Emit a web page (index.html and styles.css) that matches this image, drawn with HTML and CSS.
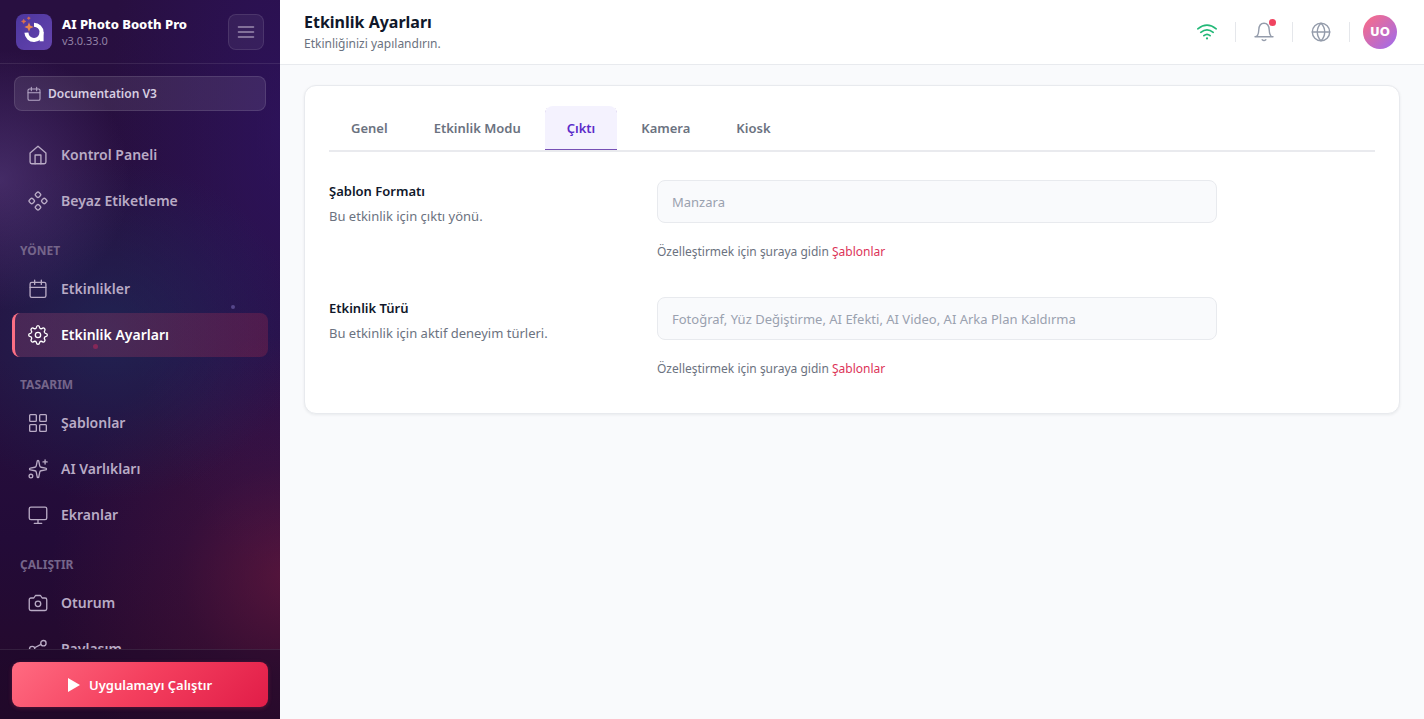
FILE: index.html
```html
<!DOCTYPE html>
<html lang="tr">
<head>
<meta charset="utf-8">
<meta name="viewport" content="width=device-width, initial-scale=1">
<title>Etkinlik Ayarları</title>
<link rel="stylesheet" href="styles.css">
</head>
<body>
<div class="app">
  <aside class="sidebar">
    <span class="spark spark-blue"></span>
    <span class="spark spark-red"></span>
    <div class="brand">
      <svg class="logo" viewBox="0 0 36 36" aria-hidden="true">
        <defs><linearGradient id="logo-bg" x1="0" y1="0" x2="1" y2="1"><stop offset="0" stop-color="#4c369e"/><stop offset="1" stop-color="#6544ae"/></linearGradient></defs>
        <rect width="36" height="36" rx="8" fill="url(#logo-bg)"/>
        <path d="M18 10.700a7.600 7.600 0 1 1-7.600 8" fill="none" stroke="#fff" stroke-width="4"/>
        <path d="M23.600 18v9.300h4V18z" fill="#fff"/>
        <path d="M13 10.200l.8 2 2 .8-2 .8-.8 2-.8-2-2-.8 2-.8z" fill="#e8854e" stroke="#e8854e" stroke-width="1.400"/>
        <path d="M7.700 5.300l.7 1.500 1.500.6-1.500.6-.7 1.500-.7-1.500-1.500-.6 1.500-.6zM12.800 2.800l.5 1 1 .4-1 .4-.5 1-.5-1-1-.4 1-.4z" fill="#e0724a" stroke="#e0724a" stroke-width=".6"/>
      </svg>
      <div class="brand-text">
        <strong class="brand-name">AI Photo Booth Pro</strong>
        <span class="brand-version">v3.0.33.0</span>
      </div>
      <button class="menu-button" type="button" aria-label="Menü">
        <svg class="icon" viewBox="0 0 18 18"><path d="M1.500 4h15M1.500 9h15M1.500 14h15"/></svg>
      </button>
    </div>
    <button class="event-picker" type="button">
      <svg class="icon icon-small" viewBox="0 0 24 24"><rect x="3" y="4.500" width="18" height="17" rx="2"/><path d="M3 10h18M8 2v5M16 2v5"/></svg>
      Documentation V3
    </button>
    <nav class="nav">
      <a class="nav-item" href="#"><svg class="icon" viewBox="0 0 24 24"><path d="M2.500 9.500l9.500-8 9.500 8V20.500a2 2 0 0 1-2 2h-15a2 2 0 0 1-2-2z"/><path d="M8.500 22.500V12h7v10.500"/></svg>Kontrol Paneli</a>
      <a class="nav-item" href="#"><svg class="icon" viewBox="0 0 24 24"><rect x="9.200" y="1.700" width="5.600" height="5.600" rx="1.800" transform="rotate(45 12 4.500)"/><rect x="1.700" y="9.200" width="5.600" height="5.600" rx="1.800" transform="rotate(45 4.500 12)"/><rect x="16.700" y="9.200" width="5.600" height="5.600" rx="1.800" transform="rotate(45 19.500 12)"/><rect x="9.200" y="16.700" width="5.600" height="5.600" rx="1.800" transform="rotate(45 12 19.500)"/></svg>Beyaz Etiketleme</a>
      <h2 class="nav-label">YÖNET</h2>
      <a class="nav-item" href="#"><svg class="icon" viewBox="0 0 24 24"><rect x="2.500" y="4" width="19" height="18" rx="2"/><path d="M2.500 10h19M8 1.500v5M16 1.500v5"/></svg>Etkinlikler</a>
      <a class="nav-item active" href="#" aria-current="page"><svg class="icon" viewBox="0 0 24 24"><circle cx="12" cy="12" r="3.200"/><path d="M10 3.200Q10.400.8 12 .8t2 2.400q.3 1.400 1.700 1.300.9-.1 1.900-.8 1.200-.6 2.200.5 1 1.100.4 2.200-.8 1.200-.6 2.200.3 1.100 1.500 1.400 2.100.4 2.100 2t-2.100 2q-1.200.3-1.500 1.400-.2 1 .6 2.200.6 1.100-.4 2.200-1 1.100-2.200.5-1-.7-1.900-.8-1.400-.1-1.700 1.300-.4 2.400-2 2.400t-2-2.400q-.3-1.400-1.700-1.300-.9.100-1.900.8-1.200.6-2.200-.5-1-1.100-.4-2.200.8-1.200.6-2.200Q4.100 14.300 2.900 14 .8 13.600.8 12t2.100-2q1.200-.3 1.500-1.400.2-1-.6-2.200-.6-1.100.4-2.200 1-1.100 2.200-.5 1 .7 1.900.8Q9.700 4.600 10 3.200z"/></svg>Etkinlik Ayarları</a>
      <h2 class="nav-label">TASARIM</h2>
      <a class="nav-item" href="#"><svg class="icon" viewBox="0 0 24 24"><rect x="2" y="2" width="8" height="8" rx="1"/><rect x="14" y="2" width="8" height="8" rx="1"/><rect x="2" y="14" width="8" height="8" rx="1"/><rect x="14" y="14" width="8" height="8" rx="1"/></svg>Şablonlar</a>
      <a class="nav-item" href="#"><svg class="icon" viewBox="0 0 24 24"><path d="M11 2.800a1 1 0 0 1 2 0l1.100 5.500a2 2 0 0 0 1.600 1.600l5.500 1.100a1 1 0 0 1 0 2l-5.500 1.100a2 2 0 0 0-1.600 1.600L13 21.200a1 1 0 0 1-2 0l-1.100-5.500a2 2 0 0 0-1.600-1.600L2.800 13a1 1 0 0 1 0-2l5.500-1.100a2 2 0 0 0 1.600-1.600z"/><path d="M20.500 1v5M23 3.500h-5"/><circle cx="3.500" cy="20.500" r="2.200"/></svg>AI Varlıkları</a>
      <a class="nav-item" href="#"><svg class="icon" viewBox="0 0 24 24"><rect x="1.500" y="2.500" width="21" height="15" rx="2"/><path d="M7.500 22h9M12 17.500V22"/></svg>Ekranlar</a>
      <h2 class="nav-label">ÇALIŞTIR</h2>
      <a class="nav-item" href="#"><svg class="icon" viewBox="0 0 24 24"><path d="M22.500 19a2 2 0 0 1-2 2h-17a2 2 0 0 1-2-2V8a2 2 0 0 1 2-2H7l2-3h6l2 3h3.500a2 2 0 0 1 2 2z"/><circle cx="12" cy="13" r="3.300"/></svg>Oturum</a>
      <a class="nav-item" href="#"><svg class="icon" viewBox="0 0 24 24"><circle cx="18.500" cy="5" r="3.200"/><circle cx="5" cy="12" r="3.200"/><circle cx="18.500" cy="19" r="3.200"/><path d="M7.900 13.500l7.700 4M15.600 6.500l-7.700 4"/></svg>Paylaşım</a>
    </nav>
    <div class="sidebar-footer">
      <button class="run-button" type="button">
        <svg class="play" viewBox="0 0 12 14" aria-hidden="true"><path d="M0 0l12 7-12 7z"/></svg>
        Uygulamayı Çalıştır
      </button>
    </div>
  </aside>

  <div class="page">
    <header class="topbar">
      <div class="heading">
        <h1 class="title">Etkinlik Ayarları</h1>
        <p class="subtitle">Etkinliğinizi yapılandırın.</p>
      </div>
      <div class="tools">
        <button class="tool online" type="button" aria-label="Bağlantı"><svg class="icon" viewBox="0 0 20 20"><path d="M.8 6.800q9.200-7.200 18.400 0M3.800 10.300q6.200-5 12.400 0M6.900 13.600q3.100-2.600 6.200 0"/><path d="M10 16.400v.1" stroke-width="2.200"/></svg></button>
        <button class="tool" type="button" aria-label="Bildirimler"><svg class="icon" viewBox="0 0 20 20"><path d="M1 14.800c2.800 0 3.600-2.500 3.800-7C5 4 6.800 1.300 10 1.300s5 2.700 5.200 6.500c.2 4.500 1 7 3.800 7zM8.200 17.800q1.800 1.600 3.600 0"/></svg><span class="badge"></span></button>
        <button class="tool" type="button" aria-label="Dil"><svg class="icon" viewBox="0 0 20 20"><circle cx="10" cy="10" r="8.700"/><path d="M1.300 10h17.400M10 1.300c2.500 2.400 3.700 5.400 3.700 8.700s-1.200 6.300-3.700 8.700C7.500 16.300 6.300 13.300 6.300 10S7.500 3.700 10 1.300z"/></svg></button>
        <button class="avatar" type="button">UO</button>
      </div>
    </header>
    <main class="content">
      <section class="card">
        <div class="tabs" role="tablist">
          <button class="tab" type="button" role="tab">Genel</button>
          <button class="tab" type="button" role="tab">Etkinlik Modu</button>
          <button class="tab selected" type="button" role="tab" aria-selected="true">Çıktı</button>
          <button class="tab" type="button" role="tab">Kamera</button>
          <button class="tab" type="button" role="tab">Kiosk</button>
        </div>
        <div class="settings">
          <div class="setting">
            <div class="setting-info">
              <label class="setting-name" for="format">Şablon Formatı</label>
              <p class="setting-description">Bu etkinlik için çıktı yönü.</p>
            </div>
            <div class="setting-field">
              <input class="field" id="format" type="text" value="Manzara" disabled>
              <p class="hint">Özelleştirmek için şuraya gidin <a class="link" href="#">Şablonlar</a></p>
            </div>
          </div>
          <div class="setting">
            <div class="setting-info">
              <label class="setting-name" for="kind">Etkinlik Türü</label>
              <p class="setting-description">Bu etkinlik için aktif deneyim türleri.</p>
            </div>
            <div class="setting-field">
              <input class="field" id="kind" type="text" value="Fotoğraf, Yüz Değiştirme, AI Efekti, AI Video, AI Arka Plan Kaldırma" disabled>
              <p class="hint">Özelleştirmek için şuraya gidin <a class="link" href="#">Şablonlar</a></p>
            </div>
          </div>
        </div>
      </section>
    </main>
  </div>
</div>
</body>
</html>
```

FILE: styles.css
```css
* { box-sizing: border-box; }

body {
  margin: 0;
  background: #f9fafc;
  color: #0f172a;
  font-family: "Noto Sans", "Open Sans", sans-serif;
  font-size: 13px;
  line-height: 20px;
}

h1, h2, p { margin: 0; }
button, input { font: inherit; }
button { cursor: pointer; }
a { text-decoration: none; }

.icon {
  width: 20px;
  height: 20px;
  flex: none;
  fill: none;
  stroke: currentColor;
  stroke-width: 1.6;
  stroke-linecap: round;
  stroke-linejoin: round;
}
.icon-small { width: 16px; height: 16px; }

.app { display: flex; height: 100vh; }

/* Sidebar */
.sidebar {
  position: relative;
  display: flex;
  flex-direction: column;
  width: 280px;
  flex: none;
  color: #fff;
  background:
    radial-gradient(circle at 0 180px, rgba(96, 70, 140, .5), transparent 130px),
    radial-gradient(ellipse 190px 170px at 110px 330px, rgba(26, 52, 100, .5), transparent),
    radial-gradient(circle at 290px 575px, rgba(125, 29, 65, .55), rgba(125, 29, 65, .2) 110px, transparent 240px),
    radial-gradient(ellipse 170px 440px at 100% 130px, rgba(48, 20, 105, .6), transparent),
    linear-gradient(180deg, #280f40 0%, #27103f 50%, #230b38 75%, #250929 100%);
}

.spark { position: absolute; border-radius: 50%; }
.spark-blue { top: 305px; left: 231px; width: 4px; height: 4px; background: #55468a; }
.spark-red { top: 344px; left: 93px; width: 5px; height: 5px; background: #a0285a; opacity: .7; z-index: 1; }

.brand {
  display: flex;
  align-items: center;
  gap: 10px;
  height: 64px;
  flex: none;
  padding: 0 16px;
  border-bottom: 1px solid rgba(255, 255, 255, .09);
}
.logo { width: 36px; height: 36px; flex: none; }
.brand-text { display: flex; flex-direction: column; flex: 1; min-width: 0; }
.brand-name { font-size: 13px; line-height: 18px; font-weight: 800; white-space: nowrap; }
.brand-version { font-size: 11px; line-height: 16px; color: #9181a5; }
.menu-button {
  display: grid;
  place-items: center;
  width: 36px;
  height: 36px;
  padding: 0;
  border: 1px solid rgba(255, 255, 255, .1);
  border-radius: 8px;
  background: rgba(255, 255, 255, .06);
  color: #9c8caf;
}
.menu-button .icon { width: 18px; height: 18px; }

.event-picker {
  display: flex;
  align-items: center;
  gap: 6px;
  height: 35px;
  flex: none;
  margin: 12px 14px 10px;
  padding: 0 11px;
  border: 1px solid rgba(255, 255, 255, .11);
  border-radius: 8px;
  background: rgba(255, 255, 255, .09);
  color: #d6cde0;
  font-size: 12px;
  font-weight: 600;
}
.event-picker .icon { color: #b5a7c6; }

.nav {
  display: flex;
  flex-direction: column;
  gap: 2px;
  flex: 1;
  min-height: 0;
  padding: 12px 12px 0;
  overflow-x: hidden;
  overflow-y: auto;
  scrollbar-width: none;
}
.nav-item {
  display: flex;
  align-items: center;
  gap: 13px;
  height: 44px;
  flex: none;
  padding: 0 13px;
  border-left: 3px solid transparent;
  border-radius: 8px;
  color: #b9abc5;
  font-size: 14px;
  font-weight: 600;
}
.nav-item.active {
  border-left-color: #fb6f84;
  background: linear-gradient(90deg, rgba(150, 70, 115, .32), rgba(150, 40, 75, .35));
  color: #fff;
}
.nav-label {
  height: 40px;
  flex: none;
  padding: 16px 8px 0;
  color: #75658a;
  font-size: 12px;
  line-height: 20px;
  font-weight: 700;
}

.sidebar-footer {
  flex: none;
  padding: 12px;
  border-top: 1px solid rgba(255, 255, 255, .09);
  background: rgba(28, 8, 42, .45);
}
.run-button {
  display: flex;
  align-items: center;
  justify-content: center;
  gap: 9px;
  width: 100%;
  height: 45px;
  padding: 0;
  border: 0;
  border-radius: 8px;
  background: linear-gradient(135deg, #ff6b81 0%, #f43f5e 50%, #e11d48 100%);
  box-shadow: 0 1px 4px rgba(244, 63, 94, .25);
  color: #fff;
  font-weight: 600;
}
.play { width: 12px; height: 14px; fill: #fff; }

/* Page */
.page { display: flex; flex-direction: column; flex: 1; min-width: 0; }
.topbar {
  display: flex;
  align-items: center;
  justify-content: space-between;
  height: 65px;
  flex: none;
  padding: 0 27px 0 24px;
  border-bottom: 1px solid #e8eaee;
  background: #fff;
}
.title { font-size: 16px; line-height: 24px; font-weight: 700; }
.subtitle { font-size: 12px; line-height: 20px; color: #6b7280; }

.tools { display: flex; align-items: center; }
.tool {
  position: relative;
  display: grid;
  place-items: center;
  width: 57px;
  height: 20px;
  padding: 0;
  border: 0;
  border-right: 1px solid #e5e7eb;
  background: none;
  color: #949cab;
}
.tool .icon { stroke-width: 1.4; }
.tool.online { color: #22b877; }
.tool.online .icon { stroke-width: 1.7; }
.badge {
  position: absolute;
  top: -3px;
  right: 16px;
  width: 7px;
  height: 7px;
  border-radius: 50%;
  background: #f04460;
}
.avatar {
  width: 34px;
  height: 34px;
  margin-left: 13px;
  padding: 0;
  border: 0;
  border-radius: 50%;
  background: linear-gradient(135deg, #ff6b81, #9b6cf0);
  color: #fff;
  font-family: "DejaVu Sans", sans-serif;
  font-size: 12px;
  font-weight: 700;
}

.content { flex: 1; min-height: 0; padding: 20px 24px; overflow: auto; }
.card {
  padding: 20px 24px 34px;
  border: 1px solid #e8eaee;
  border-radius: 12px;
  background: #fff;
  box-shadow: 0 1px 3px rgba(15, 23, 42, .07);
}
.tabs { display: flex; gap: 2px; border-bottom: 2px solid #e9eaee; }
.tab {
  height: 44px;
  padding: 0 22px;
  border: 0;
  border-radius: 8px 8px 0 0;
  background: none;
  color: #6b7280;
  font-size: 13px;
  font-weight: 600;
}
.tab.selected {
  background: #f4f2fe;
  box-shadow: inset 0 -1px #7650b5;
  color: #5b2bc9;
}

.settings { display: flex; flex-direction: column; gap: 35px; padding-top: 28px; }
.setting { display: grid; grid-template-columns: 280px minmax(0, 560px); gap: 48px; }
.setting-name { display: block; line-height: 22px; font-weight: 600; }
.setting-description { padding-top: 4px; color: #6b7280; }
.field {
  display: block;
  width: 100%;
  height: 43px;
  padding: 0 14px;
  border: 1px solid #e8eaee;
  border-radius: 8px;
  background: #f9fafc;
  color: #9aa1af;
}
.hint { padding-top: 19px; color: #6b7280; font-size: 12px; }
.link { color: #dc3458; }
```
